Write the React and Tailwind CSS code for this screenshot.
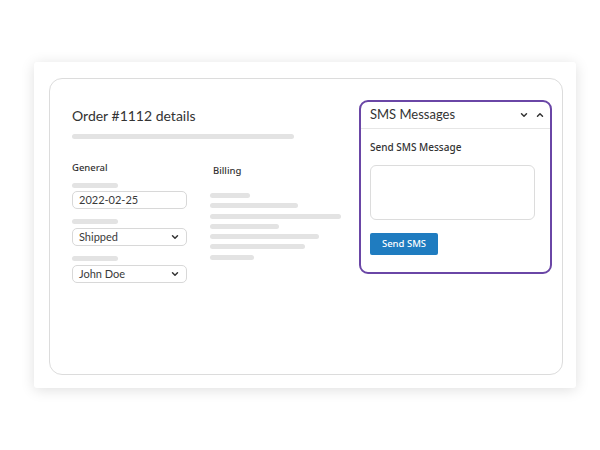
import { ChevronDown, ChevronUp } from 'lucide-react';

const font = { fontFamily: 'Lato, "Noto Sans", sans-serif' };

function Bar({ w }) {
  return <div className={`h-[5px] rounded-full bg-[#e3e3e3] ${w}`} />;
}

function Field({ value, select }) {
  return (
    <div className="flex h-[18px] w-[115px] items-center justify-between rounded-[5px] border border-[#d8d8d8] pl-[6px] pr-[6px] text-[11px] text-[#3a3a3a]">
      <span>{value}</span>
      {select && <ChevronDown className="h-[10px] w-[10px] text-[#333]" strokeWidth={3.5} />}
    </div>
  );
}

export default function App() {
  return (
    <div className="min-h-[450px] w-[600px] bg-white pt-[62px] pl-[34px]" style={font}>
      <div className="h-[326px] w-[542px] rounded-[3px] bg-white pt-[16px] pl-[15px] shadow-[0_2px_14px_rgba(0,0,0,0.13)]">
        <div className="flex h-[297px] w-[514px] rounded-[13px] border border-[#dcdcdc] pt-[21px] pl-[22px] pr-[10px]">
          <div className="flex-1">
            <h1 className="mt-[7px] text-[14px] leading-[18px] text-[#333]">Order #1112 details</h1>
            <div className="mt-[9px] h-[5px] w-[222px] rounded-full bg-[#e3e3e3]" />
            <div className="mt-[23px] flex">
              <div className="flex w-[115px] flex-col">
                <div className="font-['Noto_Sans'] text-[9.5px] font-medium leading-[12px] text-[#333]">General</div>
                <div className="mt-[9px]"><Bar w="w-[46px]" /></div>
                <div className="mt-[3px]"><Field value="2022-02-25" /></div>
                <div className="mt-[10px]"><Bar w="w-[46px]" /></div>
                <div className="mt-[4px]"><Field value="Shipped" select /></div>
                <div className="mt-[10px]"><Bar w="w-[46px]" /></div>
                <div className="mt-[4px]"><Field value="John Doe" select /></div>
              </div>
              <div className="ml-[23px] flex flex-col pt-[3px]">
                <div className="ml-[3px] font-['Noto_Sans'] text-[9.5px] font-medium leading-[12px] text-[#333]">Billing</div>
                <div className="mt-[16px] flex flex-col gap-[5.3px]">
                  <Bar w="w-[40px]" />
                  <Bar w="w-[88px]" />
                  <Bar w="w-[131px]" />
                  <Bar w="w-[69px]" />
                  <Bar w="w-[109px]" />
                  <Bar w="w-[95px]" />
                  <Bar w="w-[44px]" />
                </div>
              </div>
            </div>
          </div>
          <div className="h-[174px] w-[193px] rounded-[9px] border-2 border-[#6a46a6]">
            <div className="flex h-[27px] items-center justify-between border-b border-[#e6e6e6] pl-[9px] pr-[5px]">
              <span className="text-[13px] text-[#333]">SMS Messages</span>
              <div className="flex items-center gap-[6px] text-[#333]">
                <ChevronDown className="h-[10px] w-[10px]" strokeWidth={3.5} />
                <ChevronUp className="h-[10px] w-[10px]" strokeWidth={3.5} />
              </div>
            </div>
            <div className="pl-[9px] pr-[15px] pt-[11px]">
              <div className="font-['Noto_Sans'] text-[10px] font-medium leading-[14px] text-[#333]">Send SMS Message</div>
              <div className="mt-[11px] h-[55px] w-[165px] rounded-[6px] border border-[#dcdcdc]" />
              <button className="mt-[13px] h-[22px] w-[68px] rounded-[2px] bg-[#1f7cc0] font-['Noto_Sans'] text-[9.5px] font-medium text-white">
                Send SMS
              </button>
            </div>
          </div>
        </div>
      </div>
    </div>
  );
}
